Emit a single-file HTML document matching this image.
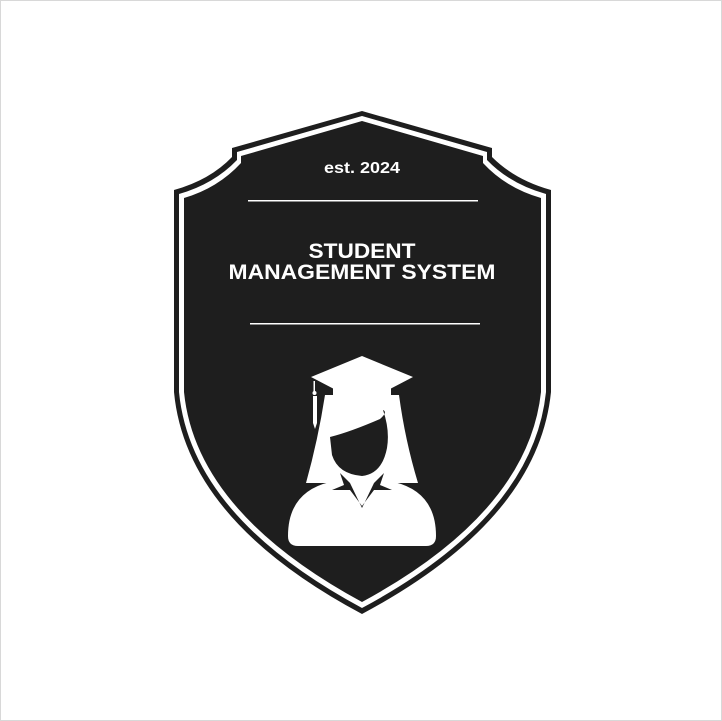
<!DOCTYPE html>
<html><head><style>
html,body{margin:0;padding:0;background:#fff;}
svg{display:block;}
</style></head><body>
<svg width="722" height="721" viewBox="0 0 722 721" xmlns="http://www.w3.org/2000/svg">
<rect x="0.5" y="0.5" width="721" height="720" fill="#fff" stroke="#d8d8d8"/>
<path d="M362,111 L232,148 L232,157 Q210,180 174,190 L174,392 Q186,520 362,614 Q538,520 551,392 L551,190 Q515,180 492,157 L492,148 Z" fill="#1e1e1e"/>
<path d="M362,116 L237,152 L237,160 Q214,184 179,194 L179,392 Q191,516 362,608 Q533,516 546,392 L546,194 Q510,184 487,160 L487,152 Z" fill="#fff"/>
<path d="M362,121 L241,156 L241,163 Q218,188 184,198 L184,392 Q196,512 362,602 Q528,512 541,392 L541,198 Q506,188 483,163 L483,156 Z" fill="#1e1e1e"/>
<g font-family="Liberation Sans, sans-serif" font-weight="bold" fill="#fff" text-anchor="middle">
<text x="362" y="173" font-size="16" textLength="76" lengthAdjust="spacingAndGlyphs">est. 2024</text>
<text x="362" y="258" font-size="21" textLength="107" lengthAdjust="spacingAndGlyphs">STUDENT</text>
<text x="362" y="279" font-size="21" textLength="267" lengthAdjust="spacingAndGlyphs">MANAGEMENT SYSTEM</text>
</g>
<rect x="248" y="200" width="230" height="1.5" fill="#fff"/>
<rect x="250" y="323" width="230" height="1.5" fill="#fff"/>
<g fill="#fff">
<!-- hair -->
<path d="M325,395 Q318,440 306,483 L418,483 Q405,440 399,395 Z"/>
<!-- cap -->
<path d="M362,356 L413,377 L390,389 L334,389 L311,377 Z"/>
<rect x="333" y="383" width="58" height="22"/>
<!-- tassel -->
<rect x="313.5" y="381" width="1.5" height="12"/>
<circle cx="314.5" cy="393" r="2"/>
<path d="M313,396 L317,396 L317,423 L315,429 L313,423 Z"/>
<!-- body -->
<path d="M288,536 Q288,492 330,482 L394,482 Q436,492 436,536 Q436,546 426,546 L298,546 Q288,546 288,536 Z"/>
</g>
<g fill="#1e1e1e">
<!-- face -->
<path d="M330,437 Q350,432 380,419 Q388,412 383,410 Q390,430 387,448 Q382,474 362,476 Q338,474 332,455 Z"/>
<!-- collar V -->
<path d="M340,473 L350,483 L362,508 L374,483 L384,473 L380,485 L392,490 L374,490 L362,506 L350,490 L332,490 L344,485 Z"/>
</g>
</svg>
</body></html>
